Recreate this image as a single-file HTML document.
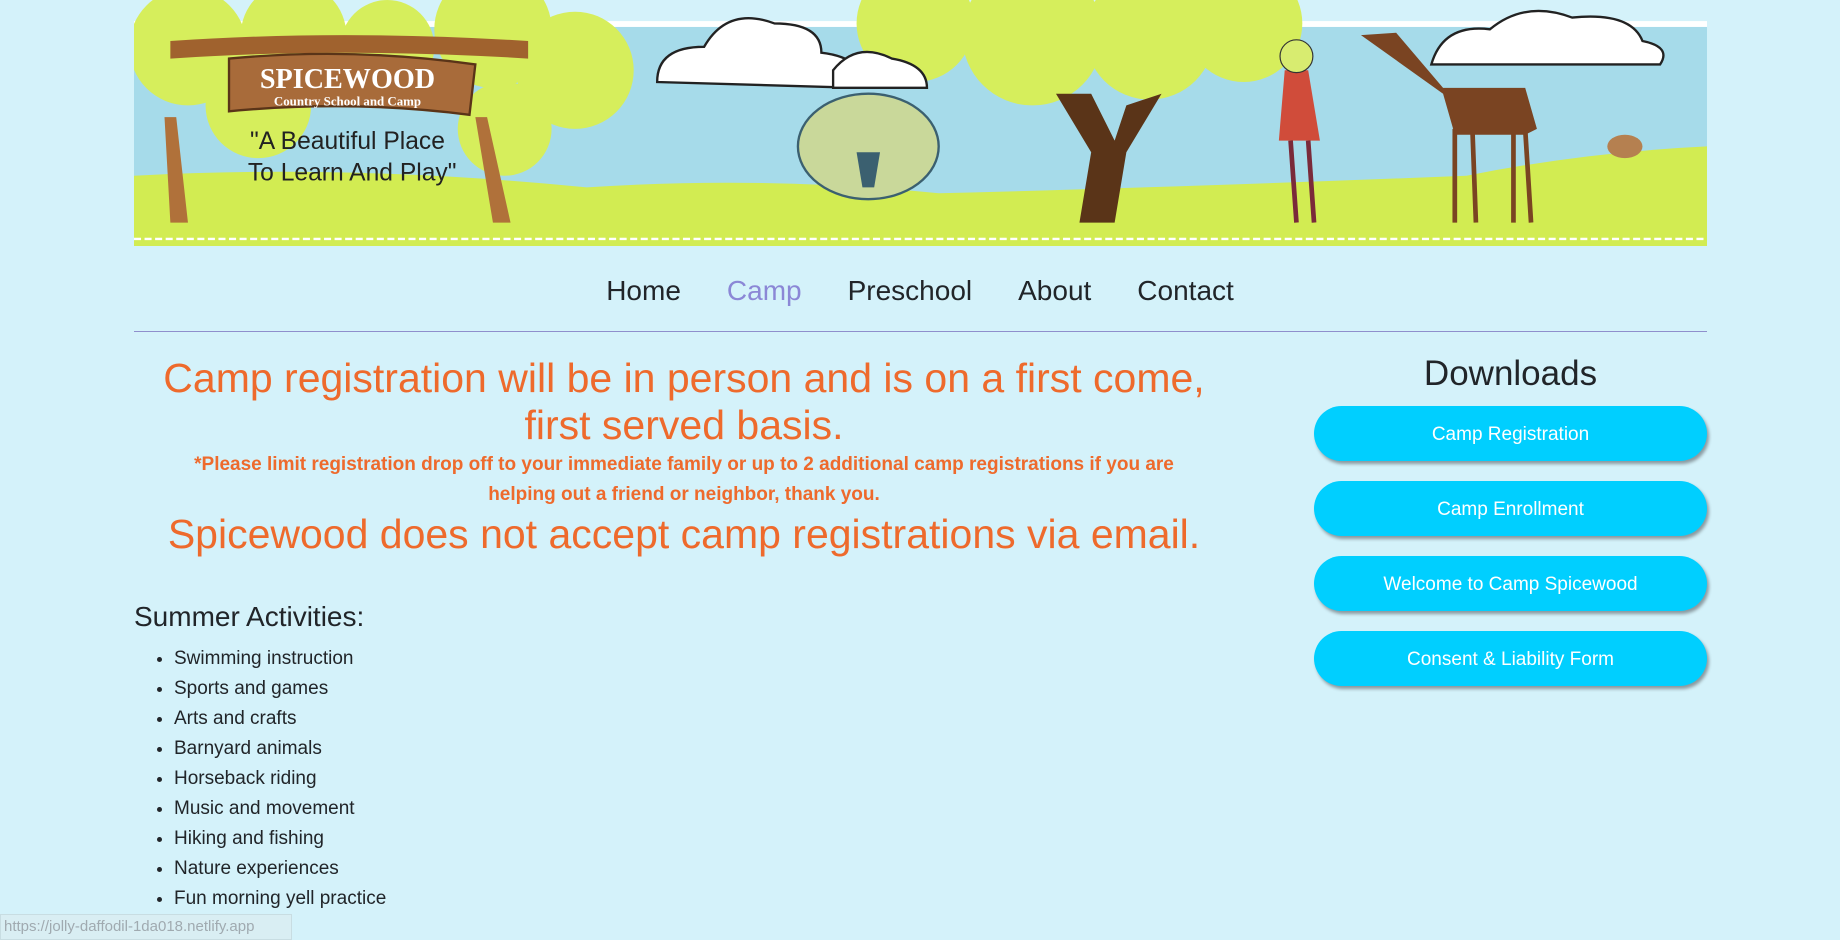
<!DOCTYPE html>
<html><head><meta charset="utf-8"><style>
*{margin:0;padding:0;box-sizing:border-box}
body{width:1840px;height:940px;overflow:hidden;background:#d4f2fa;font-family:"Liberation Sans",sans-serif;color:#212529;position:relative}
#banner{position:absolute;left:134px;top:0;width:1573px;height:246px}
nav{position:absolute;top:275px;left:0;width:1840px;text-align:center;font-size:28px}
nav span{margin:0 23px}
hr{position:absolute;left:134px;top:331px;width:1573px;border:0;border-top:1px solid #8f8fcc}
.o{position:absolute;color:#ee6a2c;text-align:center;left:134px;width:1100px}
.big{font-size:41px;line-height:47px}
.sm{font-size:19px;font-weight:bold;line-height:30px}
h3{position:absolute;left:134px;top:601px;font-size:28px;font-weight:normal}
ul{position:absolute;left:174px;top:644px;font-size:19px;line-height:30px;list-style:disc}
h2{position:absolute;left:1314px;width:393px;text-align:center;top:354px;font-size:35px;font-weight:normal}
.b{position:absolute;left:1314px;width:393px;height:55px;border-radius:28px;background:#00cfff;color:#fff;text-align:center;line-height:58px;font-size:19px;box-shadow:2px 3px 3px #8a9aa0}
.st{position:absolute;left:0;top:914px;height:26px;width:292px;background:#d9eef3;border:1px solid #c8dde2;color:#a0aab0;font-size:15px;line-height:24px;padding-left:3px}
</style></head><body>
<svg id="banner" viewBox="114 0 1341 210" preserveAspectRatio="none">
<rect x="114" y="0" width="1341" height="210" fill="#d4f2fa"/>
<rect x="114" y="20" width="1341" height="190" fill="#a6dbea"/>
<rect x="114" y="18" width="1341" height="5" fill="#fff"/>
<path d="M114 150 Q300 140 500 160 Q650 150 800 165 Q1000 160 1250 150 Q1350 130 1455 125 L1455 210 L114 210Z" fill="#d2ec52"/>
<line x1="114" y1="204" x2="1455" y2="204" stroke="#fff" stroke-width="2" stroke-dasharray="6 3"/>
<g fill="#d6ee5c"><circle cx="160" cy="40" r="50"/><circle cx="250" cy="30" r="45"/><circle cx="330" cy="40" r="40"/><circle cx="420" cy="25" r="50"/><circle cx="490" cy="60" r="50"/><circle cx="220" cy="90" r="45"/><circle cx="430" cy="110" r="40"/>
<circle cx="780" cy="20" r="50"/><circle cx="880" cy="30" r="60"/><circle cx="980" cy="30" r="55"/><circle cx="1060" cy="20" r="50"/></g>
<path d="M900 80 L930 80 L950 120 L960 90 L990 80 L960 130 L950 190 L920 190 L930 130Z" fill="#5a3418"/>
<path d="M140 100 L150 100 L160 190 L145 190Z M405 100 L415 100 L435 190 L420 190Z" fill="#b0713a"/>
<path d="M145 35 Q290 25 450 35 L450 50 Q290 40 145 50Z" fill="#a0622e"/>
<path d="M195 50 Q300 40 405 55 L400 98 Q300 85 195 95Z" fill="#a86b3a" stroke="#5a3418" stroke-width="2"/>
<text x="296" y="75" font-family="Liberation Serif" font-weight="bold" font-size="24" fill="#fff" text-anchor="middle">SPICEWOOD</text>
<text x="296" y="90" font-family="Liberation Serif" font-weight="bold" font-size="11" fill="#fff" text-anchor="middle">Country School and Camp</text>
<text x="296" y="127" font-size="21" fill="#222" text-anchor="middle">"A Beautiful Place</text>
<text x="300" y="154" font-size="21" fill="#222" text-anchor="middle">To Learn And Play"</text>
<g fill="#fff" stroke="#222" stroke-width="2"><path d="M560 70 Q560 40 600 40 Q620 5 660 20 Q700 20 700 45 Q740 50 730 75 Z"/><path d="M710 60 Q730 35 760 50 Q790 55 790 75 L710 75Z"/><path d="M1220 55 Q1230 20 1270 25 Q1300 0 1340 15 Q1390 10 1400 35 Q1425 40 1415 55Z"/></g>
<ellipse cx="740" cy="125" rx="60" ry="45" fill="#c9d89a" stroke="#3b6070" stroke-width="2"/>
<path d="M730 130 L750 130 L745 160 L735 160Z" fill="#3b6070"/>
<path d="M1095 60 L1115 60 L1125 120 L1090 120Z" fill="#d04c3a"/>
<circle cx="1105" cy="48" r="14" fill="#d8ec70" stroke="#333"/>
<path d="M1100 120 L1105 190 M1115 120 L1120 190" stroke="#7a2a3a" stroke-width="4"/>
<path d="M1160 30 L1190 28 L1230 75 L1300 75 L1310 110 L1300 115 L1240 115 L1230 80Z" fill="#7a4422"/>
<path d="M1240 110 L1240 190 M1255 110 L1258 190 M1290 110 L1290 190 M1300 110 L1305 190" stroke="#7a4422" stroke-width="4"/>
<ellipse cx="1385" cy="125" rx="15" ry="10" fill="#b58050"/>
</svg>
<nav><span>Home</span><span style="color:#8b87d6">Camp</span><span>Preschool</span><span>About</span><span>Contact</span></nav>
<hr>
<div class="o big" style="top:355px">Camp registration will be in person and is on a first come,<br>first served basis.</div>
<div class="o sm" style="top:450px">*Please limit registration drop off to your immediate family or up to 2 additional camp registrations if you are<br>helping out a friend or neighbor, thank you.</div>
<div class="o big" style="top:511px">Spicewood does not accept camp registrations via email.</div>
<h3>Summer Activities:</h3>
<ul><li>Swimming instruction</li><li>Sports and games</li><li>Arts and crafts</li><li>Barnyard animals</li><li>Horseback riding</li><li>Music and movement</li><li>Hiking and fishing</li><li>Nature experiences</li><li>Fun morning yell practice</li></ul>
<h2>Downloads</h2>
<div class="b" style="top:406px">Camp Registration</div>
<div class="b" style="top:481px">Camp Enrollment</div>
<div class="b" style="top:556px">Welcome to Camp Spicewood</div>
<div class="b" style="top:631px">Consent &amp; Liability Form</div>
<div class="st">https://jolly-daffodil-1da018.netlify.app</div>
</body></html>
